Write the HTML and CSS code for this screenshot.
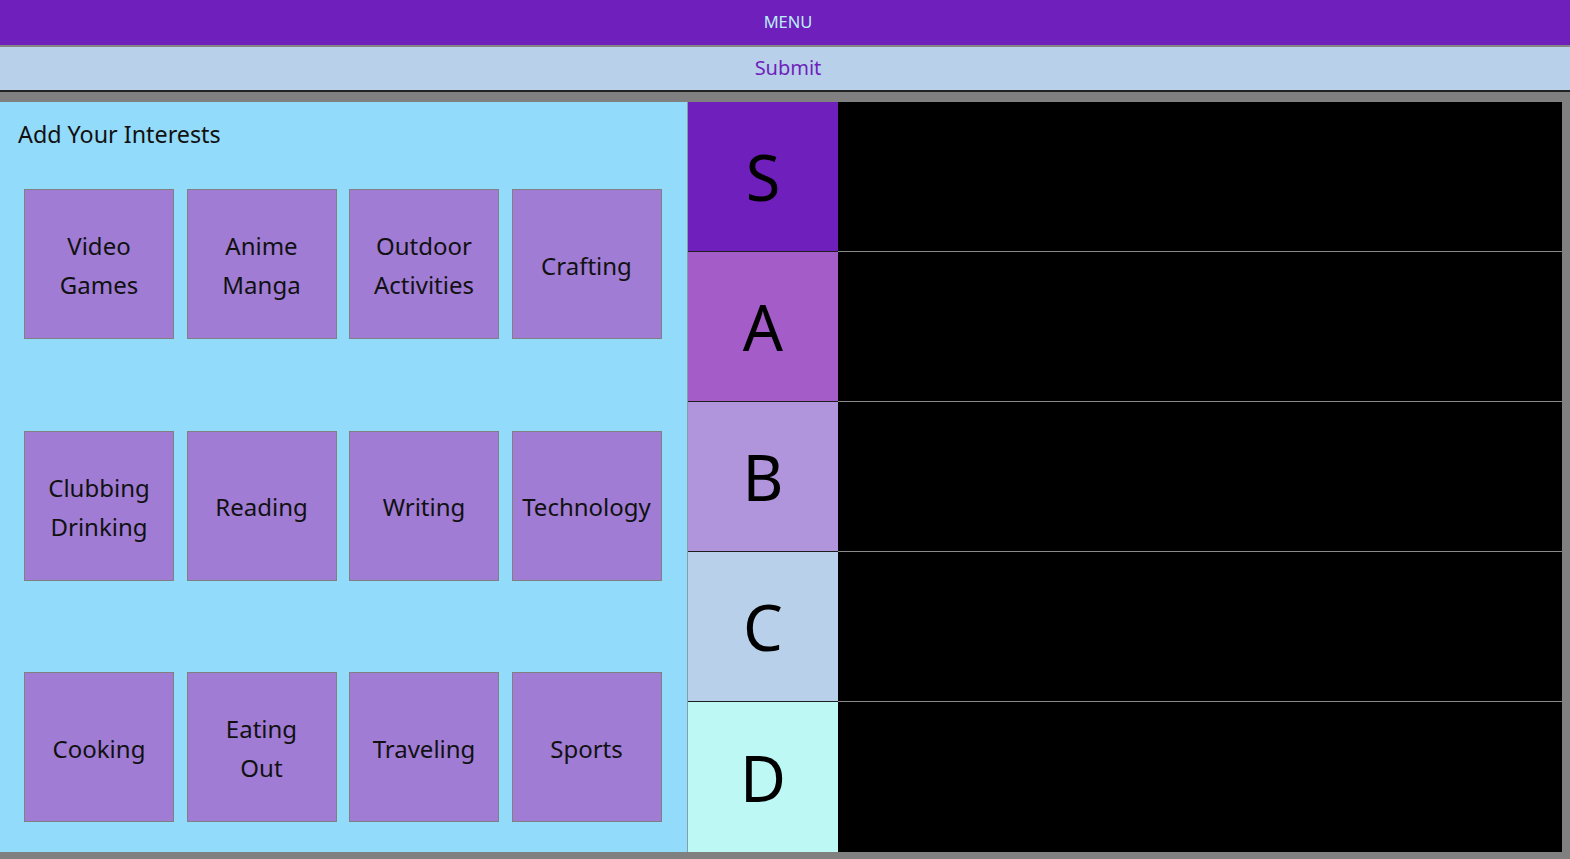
FILE: index.html
```html
<!DOCTYPE html>
<html>
<head>
<meta charset="utf-8">
<link rel="stylesheet" href="styles.css">
</head>
<body>
<header class="menu-bar">MENU</header>
<div class="submit-bar">Submit</div>
<main class="content">
  <section class="interests">
    <h1 class="interests-title">Add Your Interests</h1>
    <div class="tile-grid">
      <div class="tile">Video<br>Games</div>
      <div class="tile">Anime<br>Manga</div>
      <div class="tile">Outdoor<br>Activities</div>
      <div class="tile">Crafting</div>
      <div class="tile">Clubbing<br>Drinking</div>
      <div class="tile">Reading</div>
      <div class="tile">Writing</div>
      <div class="tile">Technology</div>
      <div class="tile">Cooking</div>
      <div class="tile">Eating<br>Out</div>
      <div class="tile">Traveling</div>
      <div class="tile">Sports</div>
    </div>
  </section>
  <section class="tiers">
    <div class="tier"><div class="tier-label tier-s">S</div><div class="tier-body"></div></div>
    <div class="tier"><div class="tier-label tier-a">A</div><div class="tier-body"></div></div>
    <div class="tier"><div class="tier-label tier-b">B</div><div class="tier-body"></div></div>
    <div class="tier"><div class="tier-label tier-c">C</div><div class="tier-body"></div></div>
    <div class="tier tier-last"><div class="tier-label tier-d">D</div><div class="tier-body"></div></div>
  </section>
</main>
</body>
</html>
```
FILE: styles.css
```css
* { box-sizing: border-box; }
html, body { margin: 0; padding: 0; }
body {
  background: #808080;
  font-family: "Noto Sans", "Open Sans", sans-serif;
  width: 1570px;
  height: 859px;
  overflow: hidden;
}
.menu-bar {
  height: 47px;
  background: #6f1fbb;
  border-bottom: 2px solid #858585;
  color: #b9eef8;
  font-size: 16.5px;
  text-align: center;
  line-height: 44px;
  padding-left: 6px;
}
.submit-bar {
  height: 45px;
  background: #b8d0ea;
  border-bottom: 2px solid #222222;
  color: #6f1fbb;
  font-size: 20px;
  text-align: center;
  line-height: 41px;
  padding-left: 6px;
}
.content {
  display: flex;
  margin-top: 10px;
  height: 750px;
}
.interests {
  width: 688px;
  background: #93dbfa;
  border-right: 1px solid #8a9ca6;
  padding: 0 0 0 24px;
}
.interests-title {
  margin: 16px 0 0 -6px;
  font-size: 23.3px;
  font-weight: 400;
  line-height: 32px;
  color: #111;
}
.tile-grid {
  display: grid;
  grid-template-columns: repeat(4, 150px);
  grid-auto-rows: 150px;
  column-gap: 12.5px;
  row-gap: 91.5px;
  margin-top: 39px;
}
.tile {
  background: #a07cd4;
  border: 1px solid #808080;
  display: flex;
  align-items: center;
  justify-content: center;
  text-align: center;
  font-size: 24px;
  line-height: 39px;
  color: #111;
  padding-top: 2px;
}
.tiers {
  width: 874px;
  display: flex;
  flex-direction: column;
}
.tier {
  display: flex;
  height: 150px;
}
.tier-label {
  width: 150px;
  display: flex;
  align-items: center;
  justify-content: center;
  font-size: 63px;
  color: #000;
  border-bottom: 1px solid #1e1e1e;
}
.tier-body {
  flex: 1;
  background: #000;
  border-bottom: 1px solid #8a8a8a;
}
.tier-last .tier-label,
.tier-last .tier-body { border-bottom: none; }
.tier-s { background: #6f1fbb; }
.tier-a { background: #a45dc8; }
.tier-b { background: #b094dc; }
.tier-c { background: #b8d0ea; }
.tier-d { background: #bdf8f5; }
```
